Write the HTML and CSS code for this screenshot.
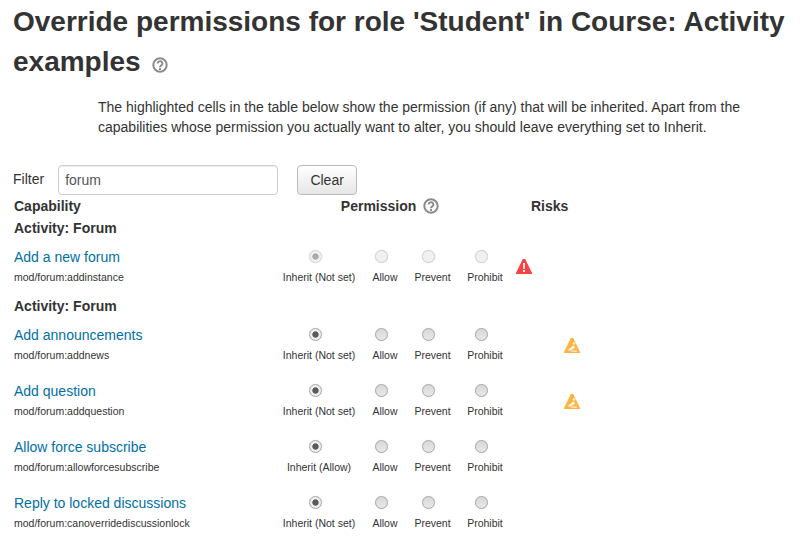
FILE: index.html
```html
<!DOCTYPE html>
<html lang="en">

<head>
    <meta charset="UTF-8">
    <meta name="viewport" content="width=device-width, initial-scale=1.0">
    <title>Override permissions</title>
    <link rel="stylesheet" href="styles.css">
</head>

<body>
    <svg class="icon-defs" width="0" height="0">
        <symbol id="help" viewBox="0 0 16 16">
            <circle cx="8" cy="8" r="6.7" fill="none" stroke="#8c8c8c" stroke-width="2"/>
            <path d="M5.6 6.5a2.4 2.3 0 1 1 3.7 1.9c-.9.6-1.3 1-1.3 1.9" fill="none" stroke="#8c8c8c" stroke-width="2"/>
            <rect x="7" y="11" width="2" height="2" fill="#8c8c8c"/>
        </symbol>
        <symbol id="risk-red" viewBox="0 0 16 16">
            <path d="M6.8 1h2.4L16 15v1H0v-1z" fill="#fb4040"/>
            <path d="M7 5h2l-.3 6H7.3z" fill="#fff"/>
            <rect x="7" y="12" width="2" height="2" fill="#fff"/>
        </symbol>
        <symbol id="risk-orange" viewBox="0 0 16 16">
            <path d="M6.8 1h2.4L16 15v1H0v-1z" fill="#ffb340"/>
            <path d="M3.5 13.2 9.5 8.4l1.8 2-5.2 3.2z" fill="#fff"/>
            <rect x="7" y="13.6" width="6" height="1" fill="#fff"/>
            <circle cx="10" cy="6.6" r="1.2" fill="#fff"/>
        </symbol>
    </svg>

    <h1>Override permissions for role 'Student' in Course: Activity examples <svg class="help-title"><use href="#help"/></svg></h1>

    <p class="intro">The highlighted cells in the table below show the permission (if any) that will be inherited. Apart from the capabilities whose permission you actually want to alter, you should leave everything set to Inherit.</p>

    <form class="filter">
        <label for="filter-input">Filter</label>
        <input type="text" id="filter-input" class="filter-input" value="forum">
        <button type="button" class="btn">Clear</button>
    </form>

    <table class="perms">
        <colgroup>
            <col class="col-name">
            <col class="col-inherit">
            <col class="col-allow">
            <col class="col-prevent">
            <col class="col-prohibit">
            <col class="col-risk1">
            <col class="col-risk2">
        </colgroup>
        <thead>
            <tr>
                <th>Capability</th>
                <th colspan="4" class="th-perm">Permission <svg class="help-small"><use href="#help"/></svg></th>
                <th colspan="2" class="th-risks">Risks</th>
            </tr>
        </thead>
        <tbody>
            <tr class="section"><td colspan="7">Activity: Forum</td></tr>
            <tr class="cap disabled">
                <td class="name"><a href="#">Add a new forum</a><small>mod/forum:addinstance</small></td>
                <td><span class="radio on"></span><label>Inherit (Not set)</label></td>
                <td><span class="radio"></span><label>Allow</label></td>
                <td><span class="radio"></span><label>Prevent</label></td>
                <td><span class="radio"></span><label>Prohibit</label></td>
                <td class="risk risk-red"><svg class="risk-icon"><use href="#risk-red"/></svg></td>
                <td class="risk"></td>
            </tr>
            <tr class="section"><td colspan="7">Activity: Forum</td></tr>
            <tr class="cap">
                <td class="name"><a href="#">Add announcements</a><small>mod/forum:addnews</small></td>
                <td><span class="radio on"></span><label>Inherit (Not set)</label></td>
                <td><span class="radio"></span><label>Allow</label></td>
                <td><span class="radio"></span><label>Prevent</label></td>
                <td><span class="radio"></span><label>Prohibit</label></td>
                <td class="risk"></td>
                <td class="risk"><svg class="risk-icon"><use href="#risk-orange"/></svg></td>
            </tr>
            <tr class="cap">
                <td class="name"><a href="#">Add question</a><small>mod/forum:addquestion</small></td>
                <td><span class="radio on"></span><label>Inherit (Not set)</label></td>
                <td><span class="radio"></span><label>Allow</label></td>
                <td><span class="radio"></span><label>Prevent</label></td>
                <td><span class="radio"></span><label>Prohibit</label></td>
                <td class="risk"></td>
                <td class="risk"><svg class="risk-icon"><use href="#risk-orange"/></svg></td>
            </tr>
            <tr class="cap">
                <td class="name"><a href="#">Allow force subscribe</a><small>mod/forum:allowforcesubscribe</small></td>
                <td><span class="radio on"></span><label>Inherit (Allow)</label></td>
                <td><span class="radio"></span><label>Allow</label></td>
                <td><span class="radio"></span><label>Prevent</label></td>
                <td><span class="radio"></span><label>Prohibit</label></td>
                <td class="risk"></td>
                <td class="risk"></td>
            </tr>
            <tr class="cap">
                <td class="name"><a href="#">Reply to locked discussions</a><small>mod/forum:canoverridediscussionlock</small></td>
                <td><span class="radio on"></span><label>Inherit (Not set)</label></td>
                <td><span class="radio"></span><label>Allow</label></td>
                <td><span class="radio"></span><label>Prevent</label></td>
                <td><span class="radio"></span><label>Prohibit</label></td>
                <td class="risk"></td>
                <td class="risk"></td>
            </tr>
        </tbody>
    </table>
</body>

</html>
```

FILE: styles.css
```css
html {
    overflow: hidden;
}

body {
    margin: 0;
    padding: 0 13px 0 14px;
    height: 543px;
    overflow: hidden;
    font-family: "Liberation Sans", Arial, sans-serif;
    font-size: 14px;
    line-height: 20px;
    color: #333;
    background-color: #fff;
}

.icon-defs {
    position: absolute;
}

h1 {
    margin: 0 0 0 -1px;
    padding-top: 2px;
    font-size: 28px;
    line-height: 40px;
    font-weight: bold;
    color: #333;
}

.help-title {
    width: 16px;
    height: 16px;
    margin-left: 4px;
    vertical-align: -2px;
}

.intro {
    margin: 15px 0 0 84px;
    line-height: 20px;
    max-width: 660px;
}

.filter {
    display: flex;
    align-items: center;
    margin-top: 28px;
    height: 30px;
}

.filter label {
    margin-left: -1px;
    margin-right: 14px;
    margin-top: -2px;
}

.filter-input {
    box-sizing: border-box;
    width: 220px;
    height: 30px;
    padding: 4px 6px;
    border: 1px solid #ccc;
    border-radius: 4px;
    font-family: inherit;
    font-size: 14px;
    color: #555;
    box-shadow: inset 0 1px 1px rgba(0, 0, 0, 0.075);
}

.btn {
    box-sizing: border-box;
    width: 60px;
    height: 30px;
    margin-left: 19px;
    padding: 0;
    border: 1px solid #bbb;
    border-radius: 4px;
    font-family: inherit;
    font-size: 14px;
    color: #333;
    background: linear-gradient(#fff, #e6e6e6);
}

.perms {
    border-collapse: collapse;
    table-layout: fixed;
    width: 594px;
}

.col-name { width: 261px; }
.col-inherit { width: 88px; }
.col-allow { width: 44px; }
.col-prevent { width: 51px; }
.col-prohibit { width: 54px; }
.col-risk1 { width: 24px; }
.col-risk2 { width: 72px; }

.perms th,
.perms td {
    padding: 0;
}

.perms th {
    height: 22px;
    text-align: left;
    font-weight: bold;
}

.th-perm {
    text-align: center !important;
    padding-right: 7px !important;
}

.th-risks {
    padding-left: 19px !important;
}

.help-small {
    width: 16px;
    height: 16px;
    margin-left: 3px;
    vertical-align: -3px;
}

.perms .section td {
    height: 20px;
    padding: 1px 0;
    font-weight: bold;
}

.perms .cap td {
    height: 56px;
    text-align: center;
    vertical-align: top;
    padding-top: 8px;
    box-sizing: border-box;
}

.perms .cap .name {
    text-align: left;
}

.name a {
    display: block;
    color: #0070a8;
    text-decoration: none;
}

.name small {
    display: block;
    margin-top: 1px;
    font-size: 10.5px;
    line-height: 18px;
}

.radio {
    display: block;
    box-sizing: border-box;
    width: 13px;
    height: 13px;
    margin: 3px auto 0;
    position: relative;
    left: -4px;
    border: 1px solid #a8a8a8;
    border-radius: 50%;
    background: linear-gradient(#d8d8d8, #e8e8e8);
    box-shadow: 0 0 1px rgba(0, 0, 0, 0.2);
}

.radio.on {
    background: radial-gradient(circle, #5a5a5a 0, #5a5a5a 2.8px, #eee 3.5px);
}

.cap label {
    display: block;
    margin-top: 4px;
    font-size: 10.5px;
    line-height: 20px;
    white-space: nowrap;
}

.disabled .radio {
    border-color: #d4d4d4;
    background: #f0f0f0;
}

.disabled .radio.on {
    background: radial-gradient(circle, #aaa 0, #aaa 2.8px, #f0f0f0 3.5px);
}

.risk-icon {
    width: 16px;
    height: 16px;
    display: block;
    margin: 0 auto;
}

.perms .cap .risk {
    padding-top: 20px;
}

.perms .cap .risk-red {
    padding-top: 19px;
}
```
